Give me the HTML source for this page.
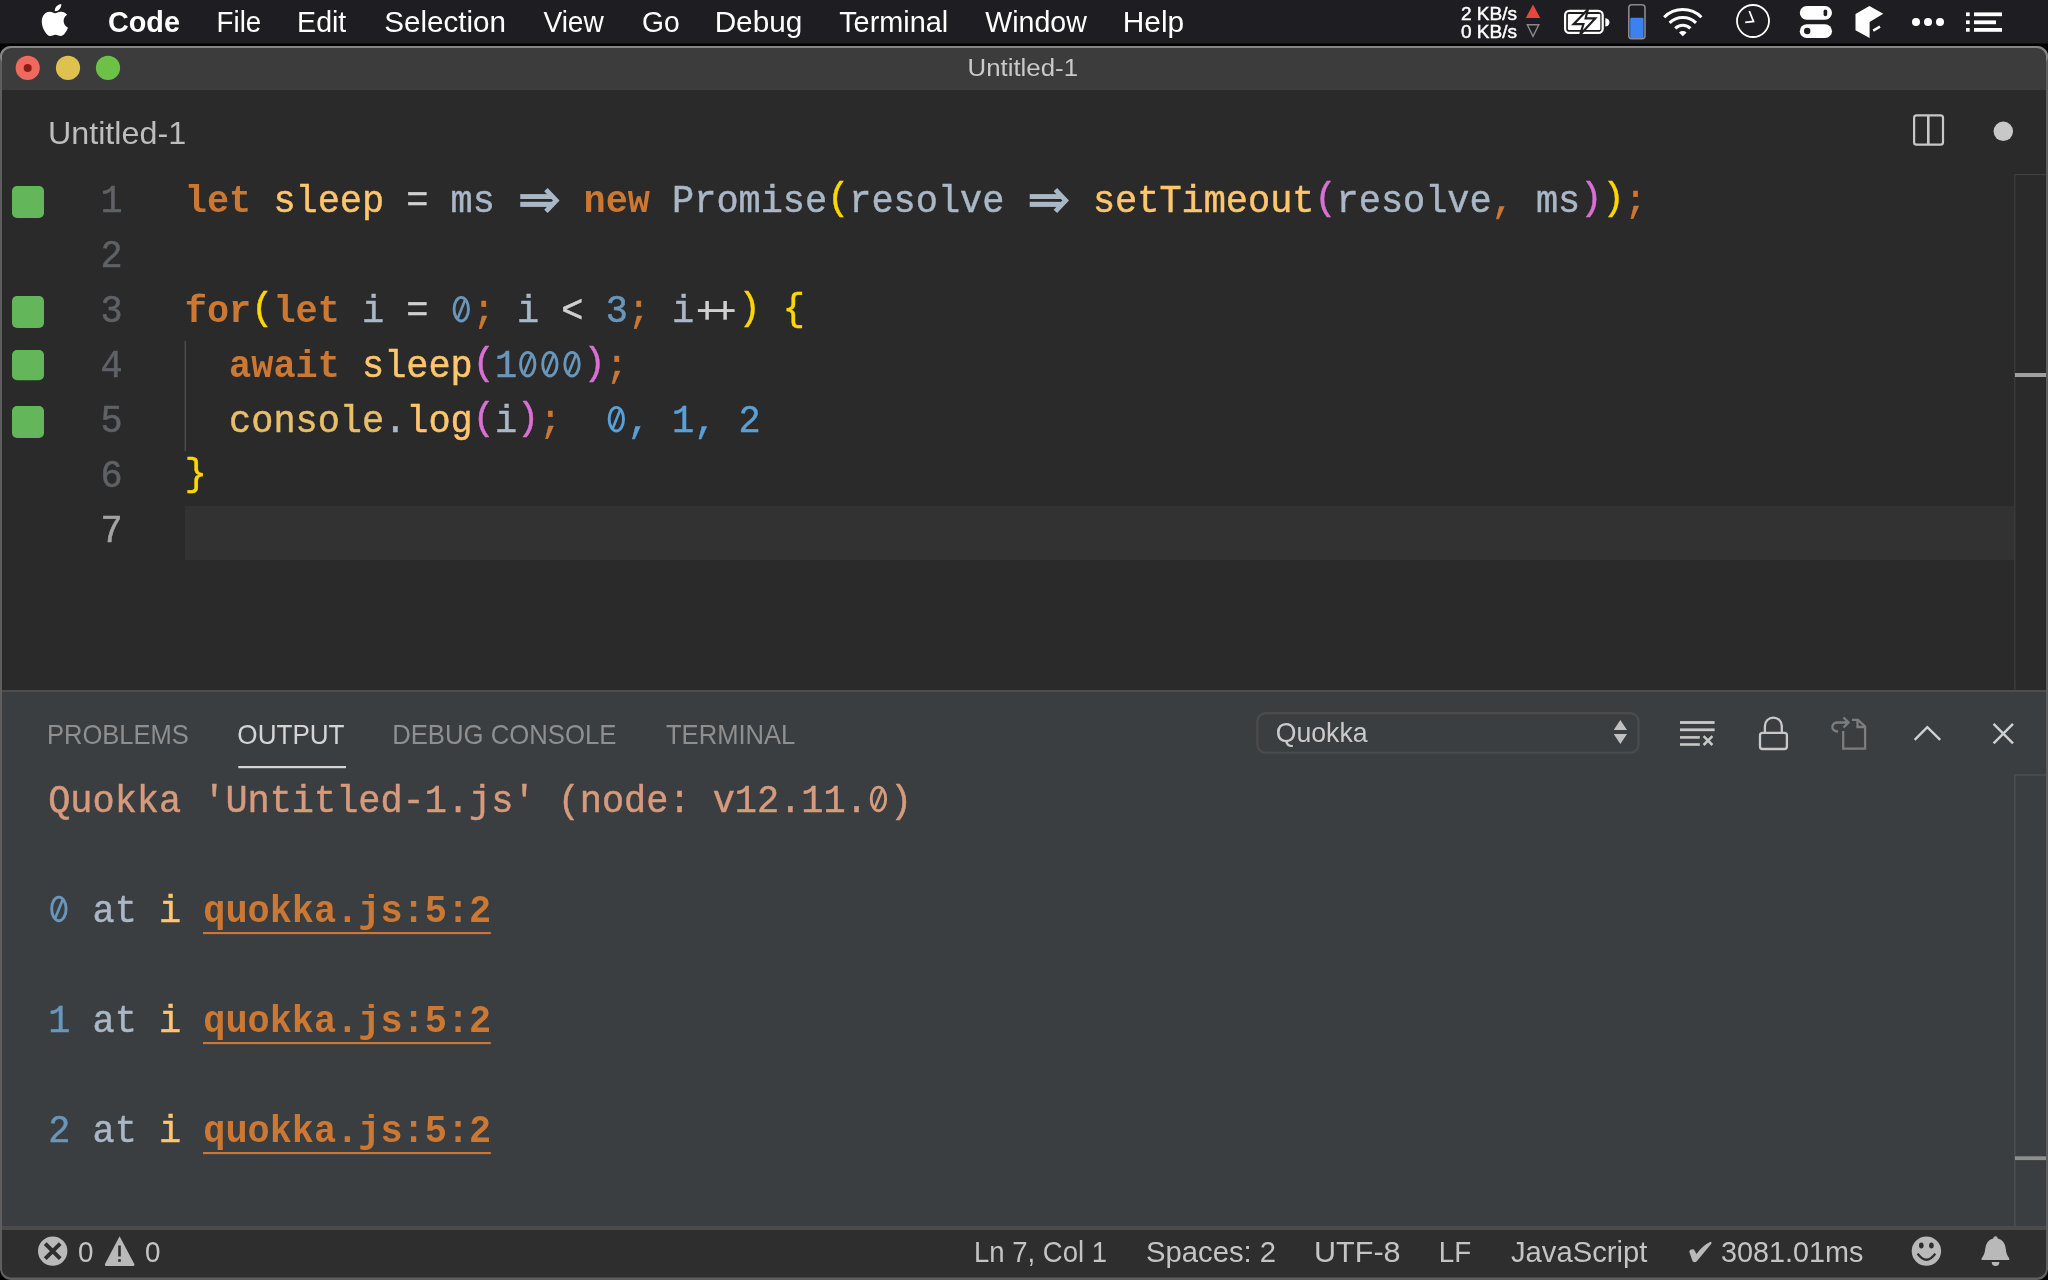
<!DOCTYPE html>
<html><head><meta charset="utf-8"><title>Untitled-1</title>
<style>
html,body{margin:0;padding:0;background:#000;width:2048px;height:1280px;overflow:hidden;font-family:"Liberation Sans",sans-serif;}
svg{display:block;position:absolute;left:0;top:0;will-change:transform;}
</style></head><body>
<svg width="2048" height="1280" viewBox="0 0 2048 1280">
<defs>
<clipPath id="win"><rect x="2" y="48" width="2044" height="1229.5" rx="9" ry="9"/></clipPath>
</defs>
<rect x="0" y="0" width="2048" height="1280" fill="#000"/>
<rect x="0" y="0" width="2048" height="43.5" fill="#1e1e22"/>
<!-- window frame -->
<rect x="0" y="46" width="2048" height="1234" rx="11" ry="11" fill="#5e5e5e"/>
<rect x="0" y="46" width="2048" height="20" rx="11" ry="11" fill="#858585"/>
<g clip-path="url(#win)">
  <rect x="0" y="46" width="2048" height="44" fill="#3c3c3c"/>
  <rect x="0" y="90" width="2048" height="600" fill="#2a2a2a"/>
  <rect x="0" y="690" width="2048" height="2" fill="#4d4d4d"/>
  <rect x="0" y="692" width="2048" height="534" fill="#3b3e41"/>
  <rect x="0" y="1226" width="2048" height="4" fill="#4b4b4b"/>
  <rect x="0" y="1230" width="2048" height="60" fill="#2e2e2e"/>
</g>
<!-- traffic lights -->
<circle cx="27.7" cy="67.9" r="12.1" fill="#ee6a5f"/>
<circle cx="27.7" cy="67.9" r="4" fill="#8e1c12"/>
<circle cx="68" cy="67.9" r="12.1" fill="#dfc14f"/>
<circle cx="108" cy="67.9" r="12.1" fill="#6ec147"/>

<!-- editor decorations -->
<rect x="185" y="506" width="1829.5" height="54" fill="#323232"/>
<rect x="184.5" y="341" width="1.6" height="110" fill="#4a4a4a"/>
<rect x="12" y="186" width="32" height="32" rx="5" fill="#64b65a"/>
<rect x="12" y="296" width="32" height="32" rx="5" fill="#64b65a"/>
<rect x="12" y="350" width="32" height="30.2" rx="5" fill="#64b65a"/>
<rect x="12" y="406" width="32" height="32" rx="5" fill="#64b65a"/>
<!-- editor scrollbar -->
<rect x="2014.2" y="174" width="1.2" height="516" fill="#3e3e3e"/>
<rect x="2014.2" y="174" width="32" height="1.2" fill="#3e3e3e"/>
<rect x="2015" y="373" width="31" height="4" fill="#a0a0a0"/>
<!-- split / dot -->
<rect x="1914.1" y="115.4" width="28.9" height="29.3" rx="2.5" fill="none" stroke="#c8c8c8" stroke-width="2.2"/>
<rect x="1927" y="115" width="2.6" height="30" fill="#c8c8c8"/>
<circle cx="2003.3" cy="131.3" r="9.7" fill="#c8c8c8"/>

<!-- panel -->
<rect x="238.3" y="766" width="107.7" height="2.2" fill="#d4d4d4"/>
<rect x="1257.3" y="713.15" width="381.3" height="39.6" rx="8.5" fill="none" stroke="#4b4b4b" stroke-width="2.2"/>
<polygon points="1613.7,730 1620.35,720 1627,730" fill="#c0c0c0"/>
<polygon points="1613.7,734 1620.35,744 1627,734" fill="#c0c0c0"/>
<g fill="#c8c8c8">
 <rect x="1680" y="721.1" width="34.6" height="2.8"/>
 <rect x="1680" y="728.4" width="34.6" height="2.8"/>
 <rect x="1680" y="736.1" width="19.8" height="2.6"/>
 <rect x="1680" y="743.2" width="19.8" height="2.6"/>
</g>
<path d="M1703.6,736.2 L1712.4,745 M1712.4,736.2 L1703.6,745" stroke="#c8c8c8" stroke-width="2.5" fill="none"/>
<path d="M1764.9,732 V726 A8.4,8.4 0 0 1 1781.8,726 V732" stroke="#c8c8c8" stroke-width="2.3" fill="none"/>
<rect x="1760" y="732.8" width="26.9" height="16.2" rx="2.5" fill="none" stroke="#c8c8c8" stroke-width="2.3"/>
<path d="M1843.2,731 V748.6 H1865.1 V726.5 L1858,719.8 H1852" stroke="#7d7d7d" stroke-width="2.3" fill="none"/>
<path d="M1857.5,719.8 V727 H1865" stroke="#7d7d7d" stroke-width="2.3" fill="none"/>
<path d="M1838,731.5 C1830,731 1831,722 1838,722.5 H1848 M1843.5,717.5 L1848.5,722.5 L1843.5,727.5" stroke="#7d7d7d" stroke-width="2.3" fill="none"/>
<polyline points="1914.7,739.9 1927.3,727.2 1940.2,739.9" stroke="#d0d0d0" stroke-width="2.4" fill="none"/>
<path d="M1993.6,723.8 L2013,743.3 M2013,723.8 L1993.6,743.3" stroke="#d0d0d0" stroke-width="2.4" fill="none"/>
<!-- panel scrollbar -->
<rect x="2014.2" y="774.4" width="1.2" height="452" fill="#505356"/>
<rect x="2014.2" y="774.4" width="32" height="1.2" fill="#505356"/>
<rect x="2014.2" y="680" width="1.2" height="10" fill="#3e3e3e"/>
<rect x="2015" y="1156.3" width="31" height="3.8" fill="#8e908e"/>

<!-- status bar icons -->
<circle cx="52.7" cy="1251.1" r="14.7" fill="#b9b9b9"/>
<path d="M45.2,1243.6 L60.2,1258.6 M60.2,1243.6 L45.2,1258.6" stroke="#2e2e2e" stroke-width="4"/>
<path d="M119.6,1236.3 L134.3,1264 Q135,1266 132.5,1266 H106.8 Q104.3,1266 105,1264 Z" fill="#b9b9b9"/>
<rect x="118.2" y="1245.5" width="2.6" height="11" fill="#2e2e2e"/>
<rect x="118.2" y="1259.2" width="2.6" height="2.6" fill="#2e2e2e"/>
<path d="M1689.2,1251.5 Q1690.5,1248.2 1694,1249.5 L1696.5,1254 Q1703,1245 1710.5,1241.8 Q1712,1241.8 1711.5,1243.5 L1697,1261 Q1694.5,1263.5 1692.5,1261 Z" fill="#b9b9b9"/>
<circle cx="1926.4" cy="1251.1" r="14.7" fill="#b9b9b9"/>
<ellipse cx="1921.3" cy="1245.6" rx="2.3" ry="3" fill="#2e2e2e"/>
<ellipse cx="1931.4" cy="1245.6" rx="2.3" ry="3" fill="#2e2e2e"/>
<path d="M1917.6,1253.6 Q1926.4,1266 1935.3,1253.6" stroke="#2e2e2e" stroke-width="2.4" fill="none"/>
<path d="M1995.5,1236.2 Q1997.5,1236.2 1997.8,1238.6 Q2005,1240.5 2005.8,1249 Q2006.3,1255 2009.2,1258.2 V1260 H1981.6 V1258.2 Q1984.6,1255 1985.2,1249 Q1986,1240.5 1993.2,1238.6 Q1993.5,1236.2 1995.5,1236.2 Z" fill="#b9b9b9"/>
<path d="M1991.7,1262 A3.85,3.9 0 0 0 1999.4,1262 Z" fill="#b9b9b9"/>

<!-- menubar icons -->
<g transform="translate(38.8,3.9) scale(1.34)"><path fill="#fff" d="M12.152 6.896c-.948 0-2.415-1.078-3.96-1.04-2.04.027-3.91 1.183-4.961 3.014-2.117 3.675-.546 9.103 1.519 12.09 1.013 1.454 2.208 3.09 3.792 3.039 1.52-.065 2.09-.987 3.935-.987 1.831 0 2.35.987 3.96.948 1.637-.026 2.676-1.48 3.676-2.948 1.156-1.688 1.636-3.325 1.662-3.415-.039-.013-3.182-1.221-3.22-4.857-.026-3.04 2.48-4.494 2.597-4.559-1.429-2.09-3.623-2.324-4.39-2.376-2-.156-3.675 1.09-4.61 1.09zM15.53 3.83c.843-1.012 1.4-2.427 1.245-3.83-1.207.052-2.662.805-3.532 1.818-.78.896-1.454 2.338-1.273 3.714 1.338.104 2.715-.688 3.559-1.701"/></g>
<polygon points="1525.8,18 1533,4.6 1540.3,18" fill="#e5463d"/>
<polygon points="1527.3,24.8 1538.8,24.8 1533,36.4" fill="none" stroke="#8a8a8a" stroke-width="1.4"/>
<!-- battery -->
<rect x="1565.1" y="10.9" width="37.6" height="22" rx="4.2" fill="none" stroke="#fff" stroke-width="2.2"/>
<path d="M1605.3,18.2 A4.2,4.2 0 0 1 1605.3,26.6 Z" fill="#fff"/>
<rect x="1567.9" y="14" width="32.4" height="16" rx="1" fill="#fff"/>
<polygon points="1587.8,9.6 1573.6,24.2 1583.4,24.2 1580.3,34.4 1595.2,18.4 1585.6,18.4" fill="#fff" stroke="#1e1e22" stroke-width="2.2" stroke-linejoin="miter"/>
<!-- memory bar -->
<rect x="1628.8" y="4.8" width="16.2" height="34" rx="3" fill="none" stroke="#8a8a8a" stroke-width="1.6"/>
<rect x="1630.2" y="17.8" width="13.4" height="20.2" rx="1.2" fill="#3b82f0"/>
<!-- wifi -->
<g fill="none" stroke="#fff" stroke-width="3" stroke-linecap="butt">
<path d="M1664.2,17.2 A26.5,26.5 0 0 1 1701.4,17.2"/>
<path d="M1669.6,22.9 A18.6,18.6 0 0 1 1696,22.9"/>
<path d="M1675.2,28.4 A10.8,10.8 0 0 1 1690.4,28.4"/>
</g>
<path d="M1679,32.6 A5.6,5.6 0 0 1 1686.6,32.6 L1682.8,36.2 Z" fill="#fff"/>
<!-- clock -->
<circle cx="1753" cy="21" r="16" fill="none" stroke="#fff" stroke-width="1.8"/>
<polyline points="1749.3,11 1753.5,21.5 1745.2,22.4" fill="none" stroke="#fff" stroke-width="1.8"/>
<!-- toggles -->
<rect x="1799.8" y="5.9" width="32.2" height="13.9" rx="6.95" fill="#fff"/>
<rect x="1823.6" y="9.5" width="3.6" height="6.8" rx="1.8" fill="#1e1e22"/>
<rect x="1799.8" y="24.2" width="32.2" height="13.9" rx="6.95" fill="#fff"/>
<circle cx="1807.2" cy="31" r="3.2" fill="#1e1e22"/>
<!-- cube -->
<polygon points="1869.4,5.9 1883.3,13.8 1869.6,22 1869.6,38.1 1855.5,30.2 1855.5,14" fill="#fff"/>
<path d="M1873.2,30.6 L1880,26.6" stroke="#fff" stroke-width="2.4"/>
<!-- dots -->
<circle cx="1916" cy="22" r="4" fill="#fff"/>
<circle cx="1928" cy="22" r="4" fill="#fff"/>
<circle cx="1940" cy="22" r="4" fill="#fff"/>
<!-- list -->
<g fill="#fff">
<rect x="1966" y="12.4" width="3.7" height="3.7"/><rect x="1966" y="20.4" width="3.7" height="3.7"/><rect x="1966" y="28" width="3.7" height="3.7"/>
<rect x="1974" y="12.4" width="28" height="3.8"/><rect x="1974" y="20.4" width="22" height="3.8"/><rect x="1974" y="28" width="28" height="3.8"/>
</g>

<text x="107.95" y="32.20" font-family="Liberation Sans" font-size="30.2" font-weight="bold" fill="#ffffff" textLength="72.01" lengthAdjust="spacingAndGlyphs">Code</text>
<text x="216.56" y="32.20" font-family="Liberation Sans" font-size="30.2" font-weight="normal" fill="#ffffff" textLength="44.66" lengthAdjust="spacingAndGlyphs">File</text>
<text x="297.11" y="32.20" font-family="Liberation Sans" font-size="30.2" font-weight="normal" fill="#ffffff" textLength="49.21" lengthAdjust="spacingAndGlyphs">Edit</text>
<text x="384.22" y="32.20" font-family="Liberation Sans" font-size="30.2" font-weight="normal" fill="#ffffff" textLength="121.84" lengthAdjust="spacingAndGlyphs">Selection</text>
<text x="543.40" y="32.20" font-family="Liberation Sans" font-size="30.2" font-weight="normal" fill="#ffffff" textLength="60.41" lengthAdjust="spacingAndGlyphs">View</text>
<text x="642.06" y="32.20" font-family="Liberation Sans" font-size="30.2" font-weight="normal" fill="#ffffff" textLength="37.67" lengthAdjust="spacingAndGlyphs">Go</text>
<text x="714.63" y="32.20" font-family="Liberation Sans" font-size="30.2" font-weight="normal" fill="#ffffff" textLength="87.74" lengthAdjust="spacingAndGlyphs">Debug</text>
<text x="839.20" y="32.20" font-family="Liberation Sans" font-size="30.2" font-weight="normal" fill="#ffffff" textLength="109.03" lengthAdjust="spacingAndGlyphs">Terminal</text>
<text x="985.20" y="32.20" font-family="Liberation Sans" font-size="30.2" font-weight="normal" fill="#ffffff" textLength="101.61" lengthAdjust="spacingAndGlyphs">Window</text>
<text x="1122.82" y="32.20" font-family="Liberation Sans" font-size="30.2" font-weight="normal" fill="#ffffff" textLength="61.36" lengthAdjust="spacingAndGlyphs">Help</text>
<text x="967.54" y="76.00" font-family="Liberation Sans" font-size="24.4" font-weight="normal" fill="#c9c9c9" textLength="110.46" lengthAdjust="spacingAndGlyphs">Untitled-1</text>
<text x="47.98" y="144.00" font-family="Liberation Sans" font-size="32.0" font-weight="normal" fill="#bdbdbd" textLength="138.12" lengthAdjust="spacingAndGlyphs">Untitled-1</text>
<text x="46.95" y="744.20" font-family="Liberation Sans" font-size="27.6" font-weight="normal" fill="#8f8f8f" textLength="141.93" lengthAdjust="spacingAndGlyphs">PROBLEMS</text>
<text x="237.35" y="744.20" font-family="Liberation Sans" font-size="27.6" font-weight="normal" fill="#d4d4d4" textLength="107.21" lengthAdjust="spacingAndGlyphs">OUTPUT</text>
<text x="392.14" y="744.20" font-family="Liberation Sans" font-size="27.6" font-weight="normal" fill="#8f8f8f" textLength="224.24" lengthAdjust="spacingAndGlyphs">DEBUG CONSOLE</text>
<text x="666.00" y="744.20" font-family="Liberation Sans" font-size="27.6" font-weight="normal" fill="#8f8f8f" textLength="129.32" lengthAdjust="spacingAndGlyphs">TERMINAL</text>
<text x="1275.66" y="742.00" font-family="Liberation Sans" font-size="28.3" font-weight="normal" fill="#cacaca" textLength="91.89" lengthAdjust="spacingAndGlyphs">Quokka</text>
<text x="78.07" y="1262.00" font-family="Liberation Sans" font-size="29.8" font-weight="normal" fill="#c4c4c4" textLength="15.47" lengthAdjust="spacingAndGlyphs">0</text>
<text x="145.07" y="1262.00" font-family="Liberation Sans" font-size="29.8" font-weight="normal" fill="#c4c4c4" textLength="15.47" lengthAdjust="spacingAndGlyphs">0</text>
<text x="973.95" y="1262.00" font-family="Liberation Sans" font-size="29.8" font-weight="normal" fill="#c4c4c4" textLength="133.07" lengthAdjust="spacingAndGlyphs">Ln 7, Col 1</text>
<text x="1146.02" y="1262.00" font-family="Liberation Sans" font-size="29.8" font-weight="normal" fill="#c4c4c4" textLength="130.04" lengthAdjust="spacingAndGlyphs">Spaces: 2</text>
<text x="1313.95" y="1262.00" font-family="Liberation Sans" font-size="29.8" font-weight="normal" fill="#c4c4c4" textLength="86.64" lengthAdjust="spacingAndGlyphs">UTF-8</text>
<text x="1438.73" y="1262.00" font-family="Liberation Sans" font-size="29.8" font-weight="normal" fill="#c4c4c4" textLength="32.45" lengthAdjust="spacingAndGlyphs">LF</text>
<text x="1511.00" y="1262.00" font-family="Liberation Sans" font-size="29.8" font-weight="normal" fill="#c4c4c4" textLength="136.29" lengthAdjust="spacingAndGlyphs">JavaScript</text>
<text x="1721.03" y="1262.00" font-family="Liberation Sans" font-size="29.8" font-weight="normal" fill="#c4c4c4" textLength="142.43" lengthAdjust="spacingAndGlyphs">3081.01ms</text>
<text x="1461.00" y="19.80" font-family="Liberation Sans" font-size="18.0" font-weight="normal" fill="#ffffff" stroke="#ffffff" stroke-width="0.45" textLength="56.00" lengthAdjust="spacingAndGlyphs">2 KB/s</text>
<text x="1461.00" y="37.90" font-family="Liberation Sans" font-size="18.0" font-weight="normal" fill="#ffffff" stroke="#ffffff" stroke-width="0.45" textLength="56.00" lengthAdjust="spacingAndGlyphs">0 KB/s</text>
<text x="100.40" y="212.40" font-family="Liberation Mono" font-size="38.5" font-weight="normal" fill="#5e6266" stroke="#5e6266" stroke-width="0.5" textLength="22.15" lengthAdjust="spacingAndGlyphs" xml:space="preserve">1</text>
<text x="184.80" y="212.40" font-family="Liberation Mono" font-size="38.5" font-weight="bold" fill="#cc7832" textLength="66.45" lengthAdjust="spacingAndGlyphs" xml:space="preserve">let</text>
<text x="273.40" y="212.40" font-family="Liberation Mono" font-size="38.5" font-weight="normal" fill="#ffc66d" stroke="#ffc66d" stroke-width="0.5" textLength="110.75" lengthAdjust="spacingAndGlyphs" xml:space="preserve">sleep</text>
<text x="406.30" y="212.40" font-family="Liberation Mono" font-size="38.5" font-weight="normal" fill="#d0d0d0" stroke="#d0d0d0" stroke-width="0.5" textLength="22.15" lengthAdjust="spacingAndGlyphs" xml:space="preserve">=</text>
<text x="450.60" y="212.40" font-family="Liberation Mono" font-size="38.5" font-weight="normal" fill="#a9b7c6" stroke="#a9b7c6" stroke-width="0.5" textLength="44.30" lengthAdjust="spacingAndGlyphs" xml:space="preserve">ms</text>
<rect x="520.25" y="194.10" width="32.80" height="4.9" fill="#a9b7c6"/><rect x="520.25" y="201.80" width="32.80" height="5.1" fill="#a9b7c6"/><polyline points="545.95,189.60 556.25,200.50 545.95,211.40" fill="none" stroke="#a9b7c6" stroke-width="4.8"/>
<text x="583.50" y="212.40" font-family="Liberation Mono" font-size="38.5" font-weight="bold" fill="#cc7832" textLength="66.45" lengthAdjust="spacingAndGlyphs" xml:space="preserve">new</text>
<text x="672.10" y="212.40" font-family="Liberation Mono" font-size="38.5" font-weight="normal" fill="#a9b7c6" stroke="#a9b7c6" stroke-width="0.5" textLength="155.05" lengthAdjust="spacingAndGlyphs" xml:space="preserve">Promise</text>
<text x="827.15" y="209.40" font-family="Liberation Mono" font-size="38.5" font-weight="normal" fill="#ffd700" stroke="#ffd700" stroke-width="0.5" textLength="22.15" lengthAdjust="spacingAndGlyphs" xml:space="preserve">(</text>
<text x="849.30" y="212.40" font-family="Liberation Mono" font-size="38.5" font-weight="normal" fill="#a9b7c6" stroke="#a9b7c6" stroke-width="0.5" textLength="155.05" lengthAdjust="spacingAndGlyphs" xml:space="preserve">resolve</text>
<rect x="1029.70" y="194.10" width="32.80" height="4.9" fill="#a9b7c6"/><rect x="1029.70" y="201.80" width="32.80" height="5.1" fill="#a9b7c6"/><polyline points="1055.40,189.60 1065.70,200.50 1055.40,211.40" fill="none" stroke="#a9b7c6" stroke-width="4.8"/>
<text x="1092.95" y="212.40" font-family="Liberation Mono" font-size="38.5" font-weight="normal" fill="#ffc66d" stroke="#ffc66d" stroke-width="0.5" textLength="221.50" lengthAdjust="spacingAndGlyphs" xml:space="preserve">setTimeout</text>
<text x="1314.45" y="209.40" font-family="Liberation Mono" font-size="38.5" font-weight="normal" fill="#da70d6" stroke="#da70d6" stroke-width="0.5" textLength="22.15" lengthAdjust="spacingAndGlyphs" xml:space="preserve">(</text>
<text x="1336.60" y="212.40" font-family="Liberation Mono" font-size="38.5" font-weight="normal" fill="#a9b7c6" stroke="#a9b7c6" stroke-width="0.5" textLength="155.05" lengthAdjust="spacingAndGlyphs" xml:space="preserve">resolve</text>
<text x="1491.65" y="212.40" font-family="Liberation Mono" font-size="38.5" font-weight="normal" fill="#cc7832" stroke="#cc7832" stroke-width="0.5" textLength="22.15" lengthAdjust="spacingAndGlyphs" xml:space="preserve">,</text>
<text x="1535.95" y="212.40" font-family="Liberation Mono" font-size="38.5" font-weight="normal" fill="#a9b7c6" stroke="#a9b7c6" stroke-width="0.5" textLength="44.30" lengthAdjust="spacingAndGlyphs" xml:space="preserve">ms</text>
<text x="1580.25" y="209.40" font-family="Liberation Mono" font-size="38.5" font-weight="normal" fill="#da70d6" stroke="#da70d6" stroke-width="0.5" textLength="22.15" lengthAdjust="spacingAndGlyphs" xml:space="preserve">)</text>
<text x="1602.40" y="209.40" font-family="Liberation Mono" font-size="38.5" font-weight="normal" fill="#ffd700" stroke="#ffd700" stroke-width="0.5" textLength="22.15" lengthAdjust="spacingAndGlyphs" xml:space="preserve">)</text>
<text x="1624.55" y="212.40" font-family="Liberation Mono" font-size="38.5" font-weight="normal" fill="#cc7832" stroke="#cc7832" stroke-width="0.5" textLength="22.15" lengthAdjust="spacingAndGlyphs" xml:space="preserve">;</text>
<text x="100.40" y="267.40" font-family="Liberation Mono" font-size="38.5" font-weight="normal" fill="#5e6266" stroke="#5e6266" stroke-width="0.5" textLength="22.15" lengthAdjust="spacingAndGlyphs" xml:space="preserve">2</text>
<text x="100.40" y="322.40" font-family="Liberation Mono" font-size="38.5" font-weight="normal" fill="#5e6266" stroke="#5e6266" stroke-width="0.5" textLength="22.15" lengthAdjust="spacingAndGlyphs" xml:space="preserve">3</text>
<text x="184.80" y="322.40" font-family="Liberation Mono" font-size="38.5" font-weight="bold" fill="#cc7832" textLength="66.45" lengthAdjust="spacingAndGlyphs" xml:space="preserve">for</text>
<text x="251.25" y="319.40" font-family="Liberation Mono" font-size="38.5" font-weight="normal" fill="#ffd700" stroke="#ffd700" stroke-width="0.5" textLength="22.15" lengthAdjust="spacingAndGlyphs" xml:space="preserve">(</text>
<text x="273.40" y="322.40" font-family="Liberation Mono" font-size="38.5" font-weight="bold" fill="#cc7832" textLength="66.45" lengthAdjust="spacingAndGlyphs" xml:space="preserve">let</text>
<text x="362.00" y="322.40" font-family="Liberation Mono" font-size="38.5" font-weight="normal" fill="#a9b7c6" stroke="#a9b7c6" stroke-width="0.5" textLength="22.15" lengthAdjust="spacingAndGlyphs" xml:space="preserve">i</text>
<text x="406.30" y="322.40" font-family="Liberation Mono" font-size="38.5" font-weight="normal" fill="#d0d0d0" stroke="#d0d0d0" stroke-width="0.5" textLength="22.15" lengthAdjust="spacingAndGlyphs" xml:space="preserve">=</text>
<ellipse cx="461.27" cy="309.20" rx="7.2" ry="11.8" fill="none" stroke="#6897bb" stroke-width="2.9"/><line x1="457.67" y1="318.40" x2="465.07" y2="300.00" stroke="#6897bb" stroke-width="2.6"/>
<text x="472.75" y="322.40" font-family="Liberation Mono" font-size="38.5" font-weight="normal" fill="#cc7832" stroke="#cc7832" stroke-width="0.5" textLength="22.15" lengthAdjust="spacingAndGlyphs" xml:space="preserve">;</text>
<text x="517.05" y="322.40" font-family="Liberation Mono" font-size="38.5" font-weight="normal" fill="#a9b7c6" stroke="#a9b7c6" stroke-width="0.5" textLength="22.15" lengthAdjust="spacingAndGlyphs" xml:space="preserve">i</text>
<text x="561.35" y="322.40" font-family="Liberation Mono" font-size="38.5" font-weight="normal" fill="#d0d0d0" stroke="#d0d0d0" stroke-width="0.5" textLength="22.15" lengthAdjust="spacingAndGlyphs" xml:space="preserve">&lt;</text>
<text x="605.65" y="322.40" font-family="Liberation Mono" font-size="38.5" font-weight="normal" fill="#6897bb" stroke="#6897bb" stroke-width="0.5" textLength="22.15" lengthAdjust="spacingAndGlyphs" xml:space="preserve">3</text>
<text x="627.80" y="322.40" font-family="Liberation Mono" font-size="38.5" font-weight="normal" fill="#cc7832" stroke="#cc7832" stroke-width="0.5" textLength="22.15" lengthAdjust="spacingAndGlyphs" xml:space="preserve">;</text>
<text x="672.10" y="322.40" font-family="Liberation Mono" font-size="38.5" font-weight="normal" fill="#a9b7c6" stroke="#a9b7c6" stroke-width="0.5" textLength="22.15" lengthAdjust="spacingAndGlyphs" xml:space="preserve">i</text>
<rect x="697.85" y="309.10" width="36.8" height="2.9" fill="#d0d0d0"/><rect x="705.35" y="301.00" width="3.5" height="18.7" fill="#d0d0d0"/><rect x="723.35" y="301.00" width="3.5" height="18.7" fill="#d0d0d0"/>
<text x="738.55" y="319.40" font-family="Liberation Mono" font-size="38.5" font-weight="normal" fill="#ffd700" stroke="#ffd700" stroke-width="0.5" textLength="22.15" lengthAdjust="spacingAndGlyphs" xml:space="preserve">)</text>
<text x="782.85" y="320.40" font-family="Liberation Mono" font-size="38.5" font-weight="normal" fill="#ffd700" stroke="#ffd700" stroke-width="0.5" textLength="22.15" lengthAdjust="spacingAndGlyphs" xml:space="preserve">{</text>
<text x="100.40" y="377.40" font-family="Liberation Mono" font-size="38.5" font-weight="normal" fill="#5e6266" stroke="#5e6266" stroke-width="0.5" textLength="22.15" lengthAdjust="spacingAndGlyphs" xml:space="preserve">4</text>
<text x="229.10" y="377.40" font-family="Liberation Mono" font-size="38.5" font-weight="bold" fill="#cc7832" textLength="110.75" lengthAdjust="spacingAndGlyphs" xml:space="preserve">await</text>
<text x="362.00" y="377.40" font-family="Liberation Mono" font-size="38.5" font-weight="normal" fill="#ffc66d" stroke="#ffc66d" stroke-width="0.5" textLength="110.75" lengthAdjust="spacingAndGlyphs" xml:space="preserve">sleep</text>
<text x="472.75" y="374.40" font-family="Liberation Mono" font-size="38.5" font-weight="normal" fill="#da70d6" stroke="#da70d6" stroke-width="0.5" textLength="22.15" lengthAdjust="spacingAndGlyphs" xml:space="preserve">(</text>
<text x="494.90" y="377.40" font-family="Liberation Mono" font-size="38.5" font-weight="normal" fill="#6897bb" stroke="#6897bb" stroke-width="0.5" textLength="88.60" lengthAdjust="spacingAndGlyphs" xml:space="preserve">1   </text><ellipse cx="527.73" cy="364.20" rx="7.2" ry="11.8" fill="none" stroke="#6897bb" stroke-width="2.9"/><line x1="524.12" y1="373.40" x2="531.52" y2="355.00" stroke="#6897bb" stroke-width="2.6"/><ellipse cx="549.88" cy="364.20" rx="7.2" ry="11.8" fill="none" stroke="#6897bb" stroke-width="2.9"/><line x1="546.27" y1="373.40" x2="553.67" y2="355.00" stroke="#6897bb" stroke-width="2.6"/><ellipse cx="572.02" cy="364.20" rx="7.2" ry="11.8" fill="none" stroke="#6897bb" stroke-width="2.9"/><line x1="568.42" y1="373.40" x2="575.82" y2="355.00" stroke="#6897bb" stroke-width="2.6"/>
<text x="583.50" y="374.40" font-family="Liberation Mono" font-size="38.5" font-weight="normal" fill="#da70d6" stroke="#da70d6" stroke-width="0.5" textLength="22.15" lengthAdjust="spacingAndGlyphs" xml:space="preserve">)</text>
<text x="605.65" y="377.40" font-family="Liberation Mono" font-size="38.5" font-weight="normal" fill="#cc7832" stroke="#cc7832" stroke-width="0.5" textLength="22.15" lengthAdjust="spacingAndGlyphs" xml:space="preserve">;</text>
<text x="100.40" y="432.40" font-family="Liberation Mono" font-size="38.5" font-weight="normal" fill="#5e6266" stroke="#5e6266" stroke-width="0.5" textLength="22.15" lengthAdjust="spacingAndGlyphs" xml:space="preserve">5</text>
<text x="229.10" y="432.40" font-family="Liberation Mono" font-size="38.5" font-weight="normal" fill="#e8bf6a" stroke="#e8bf6a" stroke-width="0.5" textLength="155.05" lengthAdjust="spacingAndGlyphs" xml:space="preserve">console</text>
<text x="384.15" y="432.40" font-family="Liberation Mono" font-size="38.5" font-weight="normal" fill="#a9b7c6" stroke="#a9b7c6" stroke-width="0.5" textLength="22.15" lengthAdjust="spacingAndGlyphs" xml:space="preserve">.</text>
<text x="406.30" y="432.40" font-family="Liberation Mono" font-size="38.5" font-weight="normal" fill="#ffc66d" stroke="#ffc66d" stroke-width="0.5" textLength="66.45" lengthAdjust="spacingAndGlyphs" xml:space="preserve">log</text>
<text x="472.75" y="429.40" font-family="Liberation Mono" font-size="38.5" font-weight="normal" fill="#da70d6" stroke="#da70d6" stroke-width="0.5" textLength="22.15" lengthAdjust="spacingAndGlyphs" xml:space="preserve">(</text>
<text x="494.90" y="432.40" font-family="Liberation Mono" font-size="38.5" font-weight="normal" fill="#a9b7c6" stroke="#a9b7c6" stroke-width="0.5" textLength="22.15" lengthAdjust="spacingAndGlyphs" xml:space="preserve">i</text>
<text x="517.05" y="429.40" font-family="Liberation Mono" font-size="38.5" font-weight="normal" fill="#da70d6" stroke="#da70d6" stroke-width="0.5" textLength="22.15" lengthAdjust="spacingAndGlyphs" xml:space="preserve">)</text>
<text x="539.20" y="432.40" font-family="Liberation Mono" font-size="38.5" font-weight="normal" fill="#cc7832" stroke="#cc7832" stroke-width="0.5" textLength="22.15" lengthAdjust="spacingAndGlyphs" xml:space="preserve">;</text>
<ellipse cx="616.33" cy="419.20" rx="7.2" ry="11.8" fill="none" stroke="#5aa0d8" stroke-width="2.9"/><line x1="612.73" y1="428.40" x2="620.12" y2="410.00" stroke="#5aa0d8" stroke-width="2.6"/>
<text x="627.80" y="432.40" font-family="Liberation Mono" font-size="38.5" font-weight="normal" fill="#5aa0d8" stroke="#5aa0d8" stroke-width="0.5" textLength="22.15" lengthAdjust="spacingAndGlyphs" xml:space="preserve">,</text>
<text x="672.10" y="432.40" font-family="Liberation Mono" font-size="38.5" font-weight="normal" fill="#5aa0d8" stroke="#5aa0d8" stroke-width="0.5" textLength="22.15" lengthAdjust="spacingAndGlyphs" xml:space="preserve">1</text>
<text x="694.25" y="432.40" font-family="Liberation Mono" font-size="38.5" font-weight="normal" fill="#5aa0d8" stroke="#5aa0d8" stroke-width="0.5" textLength="22.15" lengthAdjust="spacingAndGlyphs" xml:space="preserve">,</text>
<text x="738.55" y="432.40" font-family="Liberation Mono" font-size="38.5" font-weight="normal" fill="#5aa0d8" stroke="#5aa0d8" stroke-width="0.5" textLength="22.15" lengthAdjust="spacingAndGlyphs" xml:space="preserve">2</text>
<text x="100.40" y="487.40" font-family="Liberation Mono" font-size="38.5" font-weight="normal" fill="#5e6266" stroke="#5e6266" stroke-width="0.5" textLength="22.15" lengthAdjust="spacingAndGlyphs" xml:space="preserve">6</text>
<text x="184.80" y="485.40" font-family="Liberation Mono" font-size="38.5" font-weight="normal" fill="#ffd700" stroke="#ffd700" stroke-width="0.5" textLength="22.15" lengthAdjust="spacingAndGlyphs" xml:space="preserve">}</text>
<text x="100.40" y="542.40" font-family="Liberation Mono" font-size="38.5" font-weight="normal" fill="#a3a3a3" stroke="#a3a3a3" stroke-width="0.5" textLength="22.15" lengthAdjust="spacingAndGlyphs" xml:space="preserve">7</text>
<text x="48.20" y="812.10" font-family="Liberation Mono" font-size="38.5" font-weight="normal" fill="#d69a7d" stroke="#d69a7d" stroke-width="0.5" textLength="863.85" lengthAdjust="spacingAndGlyphs" xml:space="preserve">Quokka &#x27;Untitled-1.js&#x27; (node: v12.11. )</text><ellipse cx="878.43" cy="798.90" rx="7.2" ry="11.8" fill="none" stroke="#d69a7d" stroke-width="2.9"/><line x1="874.83" y1="808.10" x2="882.23" y2="789.70" stroke="#d69a7d" stroke-width="2.6"/>
<ellipse cx="58.88" cy="908.90" rx="7.2" ry="11.8" fill="none" stroke="#6897bb" stroke-width="2.9"/><line x1="55.28" y1="918.10" x2="62.68" y2="899.70" stroke="#6897bb" stroke-width="2.6"/>
<text x="92.50" y="922.10" font-family="Liberation Mono" font-size="38.5" font-weight="normal" fill="#a9b7c6" stroke="#a9b7c6" stroke-width="0.5" textLength="44.30" lengthAdjust="spacingAndGlyphs" xml:space="preserve">at</text>
<text x="158.95" y="922.10" font-family="Liberation Mono" font-size="38.5" font-weight="normal" fill="#ffc66d" stroke="#ffc66d" stroke-width="0.5" textLength="22.15" lengthAdjust="spacingAndGlyphs" xml:space="preserve">i</text>
<text x="203.25" y="922.10" font-family="Liberation Mono" font-size="38.5" font-weight="bold" fill="#cc7832" textLength="287.95" lengthAdjust="spacingAndGlyphs" xml:space="preserve">quokka.js:5:2</text>
<rect x="203" y="932.00" width="287.8" height="2.1" fill="#cc7832"/>
<text x="48.20" y="1032.10" font-family="Liberation Mono" font-size="38.5" font-weight="normal" fill="#6897bb" stroke="#6897bb" stroke-width="0.5" textLength="22.15" lengthAdjust="spacingAndGlyphs" xml:space="preserve">1</text>
<text x="92.50" y="1032.10" font-family="Liberation Mono" font-size="38.5" font-weight="normal" fill="#a9b7c6" stroke="#a9b7c6" stroke-width="0.5" textLength="44.30" lengthAdjust="spacingAndGlyphs" xml:space="preserve">at</text>
<text x="158.95" y="1032.10" font-family="Liberation Mono" font-size="38.5" font-weight="normal" fill="#ffc66d" stroke="#ffc66d" stroke-width="0.5" textLength="22.15" lengthAdjust="spacingAndGlyphs" xml:space="preserve">i</text>
<text x="203.25" y="1032.10" font-family="Liberation Mono" font-size="38.5" font-weight="bold" fill="#cc7832" textLength="287.95" lengthAdjust="spacingAndGlyphs" xml:space="preserve">quokka.js:5:2</text>
<rect x="203" y="1042.00" width="287.8" height="2.1" fill="#cc7832"/>
<text x="48.20" y="1142.10" font-family="Liberation Mono" font-size="38.5" font-weight="normal" fill="#6897bb" stroke="#6897bb" stroke-width="0.5" textLength="22.15" lengthAdjust="spacingAndGlyphs" xml:space="preserve">2</text>
<text x="92.50" y="1142.10" font-family="Liberation Mono" font-size="38.5" font-weight="normal" fill="#a9b7c6" stroke="#a9b7c6" stroke-width="0.5" textLength="44.30" lengthAdjust="spacingAndGlyphs" xml:space="preserve">at</text>
<text x="158.95" y="1142.10" font-family="Liberation Mono" font-size="38.5" font-weight="normal" fill="#ffc66d" stroke="#ffc66d" stroke-width="0.5" textLength="22.15" lengthAdjust="spacingAndGlyphs" xml:space="preserve">i</text>
<text x="203.25" y="1142.10" font-family="Liberation Mono" font-size="38.5" font-weight="bold" fill="#cc7832" textLength="287.95" lengthAdjust="spacingAndGlyphs" xml:space="preserve">quokka.js:5:2</text>
<rect x="203" y="1152.00" width="287.8" height="2.1" fill="#cc7832"/>
</svg>
</body></html>
